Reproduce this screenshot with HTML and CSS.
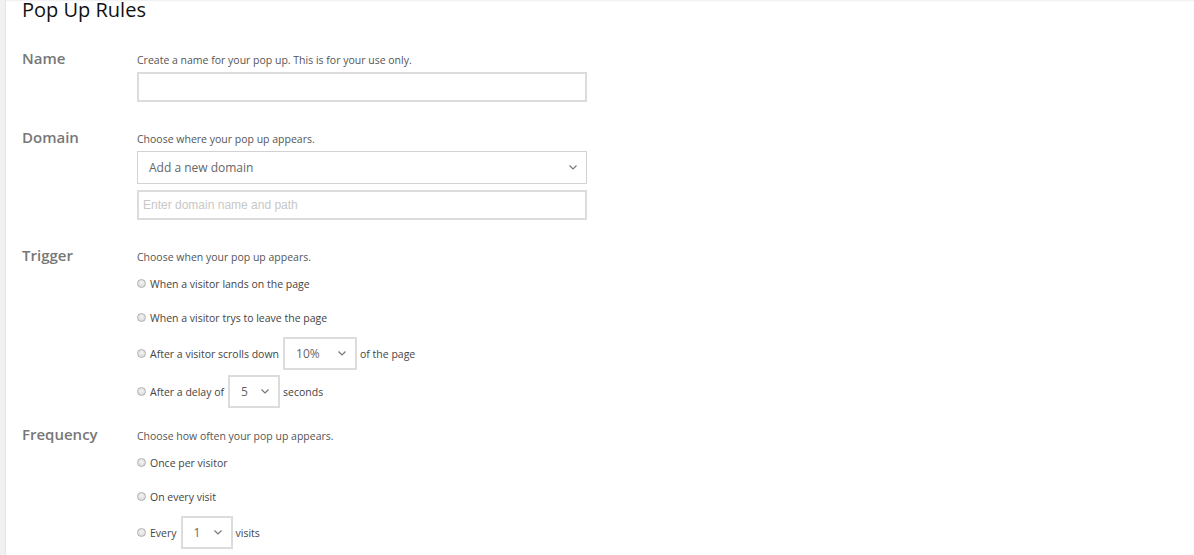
FILE: index.html
```html
<!DOCTYPE html>
<html lang="en">

<head>
    <meta charset="UTF-8">
    <meta name="viewport" content="width=device-width, initial-scale=1.0">
    <title>Pop Up Rules</title>
    <link rel="stylesheet" href="styles.css">
</head>

<body>
    <div class="page">
        <div class="side-strip"></div>
        <div class="main">
            <h1 class="page-title">Pop Up Rules</h1>

            <div class="rule-section">
                <div class="rule-label">Name</div>
                <div class="rule-body">
                    <div class="rule-desc">Create a name for your pop up. This is for your use only.</div>
                    <input type="text" class="text-input">
                </div>
            </div>

            <div class="rule-section">
                <div class="rule-label">Domain</div>
                <div class="rule-body">
                    <div class="rule-desc">Choose where your pop up appears.</div>
                    <div class="select select-wide">
                        <span>Add a new domain</span>
                        <svg class="chevron" width="8" height="5" viewBox="0 0 8 5"><polyline points="0.5,0.5 4,4 7.5,0.5" fill="none" stroke="currentColor" stroke-width="1.2"/></svg>
                    </div>
                    <input type="text" class="text-input domain-input" placeholder="Enter domain name and path">
                </div>
            </div>

            <div class="rule-section">
                <div class="rule-label">Trigger</div>
                <div class="rule-body">
                    <div class="rule-desc">Choose when your pop up appears.</div>
                    <div class="option-row"><span class="radio"></span>When a visitor lands on the page</div>
                    <div class="option-row"><span class="radio"></span>When a visitor trys to leave the page</div>
                    <div class="option-row tall"><span class="radio"></span>After a visitor scrolls down
                        <div class="select select-small scroll-select">
                            <span>10%</span>
                            <svg class="chevron" width="8" height="5" viewBox="0 0 8 5"><polyline points="0.5,0.5 4,4 7.5,0.5" fill="none" stroke="currentColor" stroke-width="1.2"/></svg>
                        </div>of the page
                    </div>
                    <div class="option-row tall"><span class="radio"></span>After a delay of
                        <div class="select select-small num-select">
                            <span>5</span>
                            <svg class="chevron" width="8" height="5" viewBox="0 0 8 5"><polyline points="0.5,0.5 4,4 7.5,0.5" fill="none" stroke="currentColor" stroke-width="1.2"/></svg>
                        </div>seconds
                    </div>
                </div>
            </div>

            <div class="rule-section frequency">
                <div class="rule-label">Frequency</div>
                <div class="rule-body">
                    <div class="rule-desc">Choose how often your pop up appears.</div>
                    <div class="option-row"><span class="radio"></span>Once per visitor</div>
                    <div class="option-row"><span class="radio"></span>On every visit</div>
                    <div class="option-row tall"><span class="radio"></span>Every
                        <div class="select select-small num-select">
                            <span>1</span>
                            <svg class="chevron" width="8" height="5" viewBox="0 0 8 5"><polyline points="0.5,0.5 4,4 7.5,0.5" fill="none" stroke="currentColor" stroke-width="1.2"/></svg>
                        </div>visits
                    </div>
                </div>
            </div>
        </div>
    </div>
</body>
</html>
```

FILE: styles.css
```css
body {
    margin: 0;
    font-family: "Open Sans", Arial, sans-serif;
    background-color: white;
}

.page {
    display: flex;
    min-height: 555px;
}

.side-strip {
    width: 5px;
    background-color: #f1f1f1;
    border-right: 1px solid #e4e4e4;
}

.main {
    flex: 1;
    padding-left: 16px;
    box-shadow: inset 0 2px 2px -1px rgba(0, 0, 0, 0.07);
}

.page-title {
    margin: 0;
    font-size: 20px;
    line-height: 20px;
    font-weight: 400;
    color: #111;
}

.rule-section {
    display: flex;
    margin-top: 29px;
}

.rule-section:first-of-type {
    margin-top: 32px;
}

.rule-section.frequency {
    margin-top: 20px;
}

.rule-label {
    width: 115px;
    margin-top: -2px;
    font-size: 15px;
    font-weight: 600;
    line-height: 16px;
    color: #777;
}

.rule-body {
    display: flex;
    flex-direction: column;
    gap: 5px;
}

.rule-desc {
    font-size: 10.5px;
    line-height: 16px;
    color: #555;
    margin-bottom: -1px;
}

.text-input {
    width: 450px;
    height: 30px;
    box-sizing: border-box;
    border: 2px solid #dcdcdc;
    margin: 0;
    padding: 0 4px;
    font-family: Arial, sans-serif;
    font-size: 12px;
    outline: none;
}

.domain-input {
    margin-top: 1px;
}

.domain-input::placeholder {
    color: #c8c8c8;
}

.select {
    display: flex;
    align-items: center;
    justify-content: space-between;
    box-sizing: border-box;
    font-size: 12px;
    color: #666;
}

.select-wide {
    width: 450px;
    height: 33px;
    border: 1px solid #d2d2d2;
    padding: 0 9px 1px 11px;
}

.chevron {
    color: #777;
}

.select-small {
    height: 33px;
    border: 2px solid #dcdcdc;
    padding: 0 9px 1px 11px;
    margin: 0 3px 0 4px;
}

.scroll-select {
    width: 74px;
}

.num-select {
    width: 52px;
}

.option-row {
    display: flex;
    align-items: center;
    height: 29px;
    font-size: 10.5px;
    color: #444;
}

.option-row.tall {
    height: 33px;
}

.radio {
    width: 9px;
    height: 9px;
    box-sizing: border-box;
    border-radius: 50%;
    border: 1px solid #b0b0b0;
    background: radial-gradient(circle at 50% 40%, #f4f4f4, #d4d4d4);
    margin: 0 4px 0 0;
}
```
